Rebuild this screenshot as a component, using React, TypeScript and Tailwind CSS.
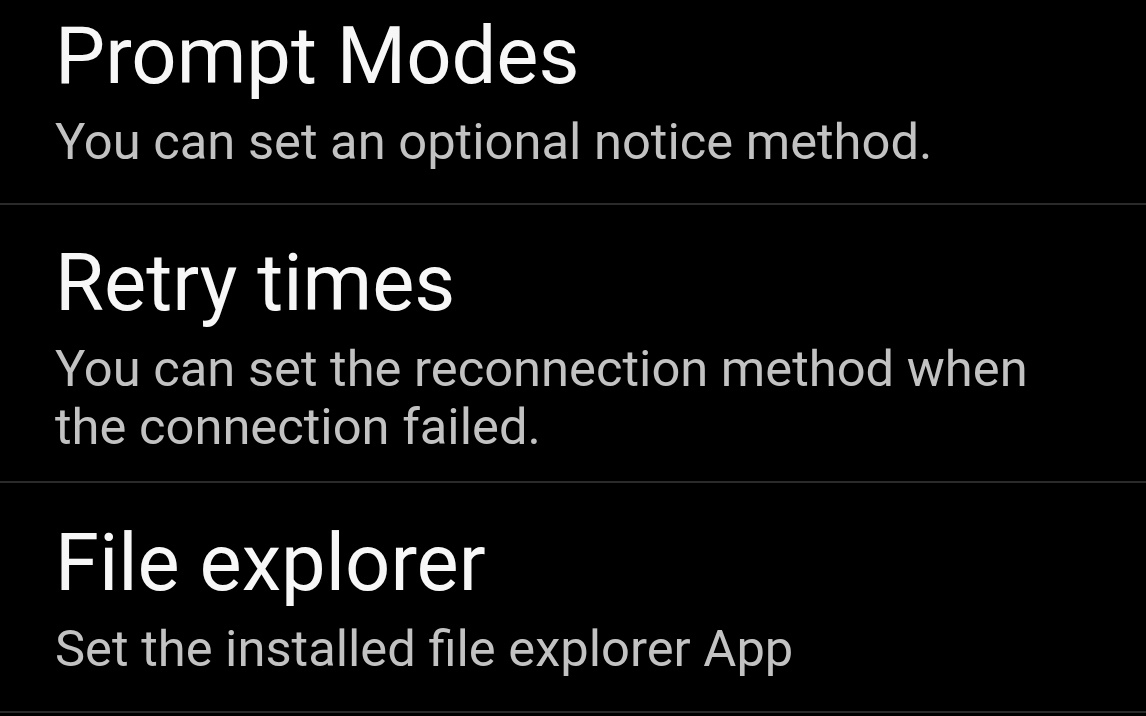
import React from "react";

type Item = { title: string; summary: string; pt: string; pb: string };

const items: Item[] = [
  { title: "Prompt Modes", summary: "You can set an optional notice method.", pt: "pt-[16px]", pb: "pb-[32px]" },
  {
    title: "Retry times",
    summary: "You can set the reconnection method when the connection failed.",
    pt: "pt-[38px]",
    pb: "pb-[25px]",
  },
  { title: "File explorer", summary: "Set the installed file explorer App", pt: "pt-[40px]", pb: "pb-[33px]" },
];

export default function App() {
  return (
    <div
      className="w-[1146px] h-[716px] overflow-hidden bg-black"
      style={{ fontFamily: "Roboto, 'Noto Sans', sans-serif" }}
    >
      {items.map((it) => (
        <div key={it.title} className="border-b-2 border-[#2a2a2a]">
          <div className={`pl-[55px] pr-[70px] ${it.pt} ${it.pb}`}>
            <div className="text-[79.5px] leading-[80px] text-[#f7f7f7]">{it.title}</div>
            <div className="mt-[17px] text-[50.7px] leading-[58px] text-[#c2c2c2]">{it.summary}</div>
          </div>
        </div>
      ))}
    </div>
  );
}
